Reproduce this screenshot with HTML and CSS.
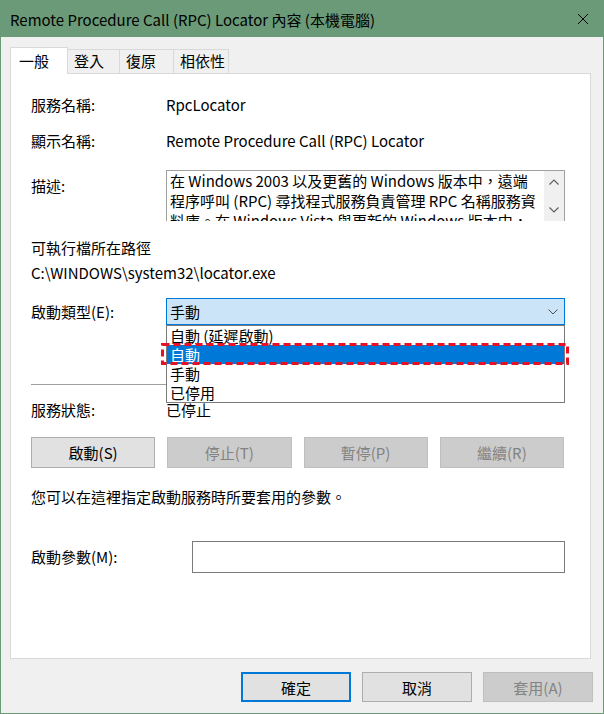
FILE: index.html
```html
<!DOCTYPE html>
<html lang="zh-Hant">
<head>
    <meta charset="UTF-8">
    <meta name="viewport" content="width=device-width, initial-scale=1.0">
    <title>Remote Procedure Call (RPC) Locator 內容 (本機電腦)</title>
    <link rel="stylesheet" href="styles.css">
</head>
<body>
    <div class="window">
        <div class="titlebar">
            <span class="title">Remote Procedure Call (RPC) Locator 內容 (本機電腦)</span>
            <svg class="close" width="10" height="10" viewBox="0 0 10 10">
                <path d="M0 0 L10 10 M10 0 L0 10" stroke="#000" stroke-width="1" fill="none"/>
            </svg>
        </div>
        <div class="content">
            <div class="tabs">
                <div class="tab active">一般</div>
                <div class="tab t-login">登入</div>
                <div class="tab t-recover">復原</div>
                <div class="tab t-dep">相依性</div>
            </div>
            <div class="panel">
                <div class="row row-name">
                    <span class="label">服務名稱:</span>
                    <span>RpcLocator</span>
                </div>
                <div class="row row-display">
                    <span class="label">顯示名稱:</span>
                    <span>Remote Procedure Call (RPC) Locator</span>
                </div>
                <div class="row row-desc">
                    <span class="label desc-label">描述:</span>
                    <div class="desc-box">
                        <div class="desc-text">在 Windows 2003 以及更舊的 Windows 版本中，遠端<br>程序呼叫 (RPC) 尋找程式服務負責管理 RPC 名稱服務資<br>料庫。在 Windows Vista 與更新的 Windows 版本中，</div>
                        <div class="scrollbar">
                            <svg width="10" height="6" viewBox="0 0 10 6"><path d="M0.5 5.5 L5 1 L9.5 5.5" stroke="#606060" stroke-width="1.2" fill="none"/></svg>
                            <svg width="10" height="6" viewBox="0 0 10 6"><path d="M0.5 0.5 L5 5 L9.5 0.5" stroke="#606060" stroke-width="1.2" fill="none"/></svg>
                        </div>
                    </div>
                </div>
                <div class="path-label">可執行檔所在路徑</div>
                <div class="path-value">C:\WINDOWS\system32\locator.exe</div>
                <div class="row row-type">
                    <span class="label">啟動類型(E):</span>
                    <div class="combo">
                        <div class="combo-box">
                            <span>手動</span>
                            <svg width="10" height="6" viewBox="0 0 10 6"><path d="M0.5 0.5 L5 5 L9.5 0.5" stroke="#505050" stroke-width="1" fill="none"/></svg>
                        </div>
                        <ul class="combo-list">
                            <li>自動 (延遲啟動)</li>
                            <li class="selected">自動</li>
                            <li>手動</li>
                            <li>已停用</li>
                            <svg class="mark" width="408" height="22" viewBox="0 0 408 22">
                                <rect x="1.5" y="1.5" width="405" height="19" fill="none" stroke="#e81123" stroke-width="3" stroke-dasharray="7 4"/>
                            </svg>
                        </ul>
                    </div>
                </div>
                <div class="separator"></div>
                <div class="row row-status">
                    <span class="label">服務狀態:</span>
                    <span>已停止</span>
                </div>
                <div class="service-buttons">
                    <button class="btn">啟動(S)</button>
                    <button class="btn" disabled>停止(T)</button>
                    <button class="btn" disabled>暫停(P)</button>
                    <button class="btn" disabled>繼續(R)</button>
                </div>
                <p class="hint">您可以在這裡指定啟動服務時所要套用的參數。</p>
                <div class="row row-param">
                    <span class="label param-label">啟動參數(M):</span>
                    <div class="param-input"></div>
                </div>
            </div>
            <div class="footer">
                <button class="btn default">確定</button>
                <button class="btn">取消</button>
                <button class="btn" disabled>套用(A)</button>
            </div>
        </div>
    </div>
</body>
</html>
```
FILE: styles.css
```css
body {
    margin: 0;
    padding: 0;
    font-family: "Noto Sans CJK TC", "Noto Sans", sans-serif;
    font-size: 15px;
    line-height: 20px;
    color: #000;
    background: #f0f0f0;
}
.window {
    width: 604px;
    height: 714px;
    box-sizing: border-box;
    border: 1px solid #6a9a77;
    border-top: none;
    background: #f0f0f0;
    display: flex;
    flex-direction: column;
}
.titlebar {
    height: 37px;
    margin: 0 -1px;
    background: #6a9a77;
    display: flex;
    align-items: center;
    justify-content: space-between;
    padding: 0 16px 0 10px;
}
.title {
    font-size: 15px;
    margin-top: 2px;
}
.content {
    flex: 1;
    padding: 10px 12px 0 9px;
}
.tabs {
    display: flex;
    align-items: flex-end;
    height: 26px;
}
.tab {
    box-sizing: border-box;
    height: 24px;
    padding-left: 6px;
    border: 1px solid #d9d9d9;
    border-bottom: none;
    border-left: none;
    line-height: 22px;
    background: #f0f0f0;
}
.tab.active {
    width: 58px;
    height: 27px;
    margin-bottom: -1px;
    padding-left: 8px;
    border-left: 1px solid #d9d9d9;
    background: #fff;
    line-height: 26px;
    position: relative;
    z-index: 1;
}
.t-login { width: 52px; }
.t-recover { width: 54px; }
.t-dep { width: 55px; }
.panel {
    height: 586px;
    box-sizing: border-box;
    background: #fff;
    border: 1px solid #d9d9d9;
    padding: 0 25px 0 20px;
    display: flow-root;
}
.row {
    display: flex;
    align-items: flex-start;
}
.label {
    width: 135px;
    flex: none;
}
.row-name { margin-top: 21px; }
.row-display { margin-top: 16px; }
.row-desc { margin-top: 19px; }
.desc-label { padding-top: 6px; }
.desc-box {
    flex: 1;
    height: 51px;
    box-sizing: border-box;
    border: 1px solid #a0a0a0;
    border-bottom: none;
    display: flex;
    overflow: hidden;
}
.desc-text {
    flex: 1;
    padding-left: 3px;
    white-space: nowrap;
    overflow: hidden;
}
.scrollbar {
    width: 20px;
    background: #f0f0f0;
    display: flex;
    flex-direction: column;
    align-items: center;
    justify-content: space-between;
    padding: 8px 0 8px;
}
.path-label { margin-top: 17px; }
.path-value { margin-top: 5px; }
.row-type {
    margin-top: 15px;
    align-items: center;
}
.combo {
    flex: 1;
    position: relative;
}
.combo-box {
    height: 27px;
    box-sizing: border-box;
    border: 1px solid #0078d7;
    background: #cce4f7;
    display: flex;
    align-items: center;
    justify-content: space-between;
    padding: 0 6px 0 3px;
}
.combo-list {
    position: absolute;
    top: 27px;
    left: 0;
    right: 0;
    margin: 0;
    padding: 0;
    list-style: none;
    background: #fff;
    border: 1px solid #7a7a7a;
    z-index: 2;
}
.combo-list li {
    height: 19px;
    line-height: 19px;
    padding-left: 3px;
}
.combo-list li.selected {
    background: #0078d7;
    color: #fff;
}
.mark {
    position: absolute;
    left: -6px;
    top: 17px;
}
.separator {
    height: 1px;
    background: #a0a0a0;
    margin-top: 59px;
}
.row-status { margin-top: 15px; }
.service-buttons {
    display: grid;
    grid-template-columns: repeat(4, 1fr);
    column-gap: 12px;
    margin-top: 17px;
    margin-right: 1px;
}
.btn {
    height: 31px;
    font-family: inherit;
    font-size: 15px;
    color: #000;
    background: #e1e1e1;
    border: 1px solid #adadad;
    padding: 0;
}
.btn:disabled {
    background: #cccccc;
    border-color: #bfbfbf;
    color: #838383;
}
.hint {
    margin: 19px 0 0;
}
.row-param {
    margin-top: 34px;
    align-items: center;
}
.param-label { width: 161px; }
.param-input {
    flex: 1;
    height: 32px;
    box-sizing: border-box;
    border: 1px solid #7a7a7a;
    background: #fff;
}
.footer {
    display: flex;
    justify-content: flex-end;
    gap: 11px;
    margin-top: 13px;
    margin-right: -2px;
}
.footer .btn {
    width: 110px;
    height: 30px;
}
.footer .btn.default {
    border: 2px solid #0078d7;
}
```
